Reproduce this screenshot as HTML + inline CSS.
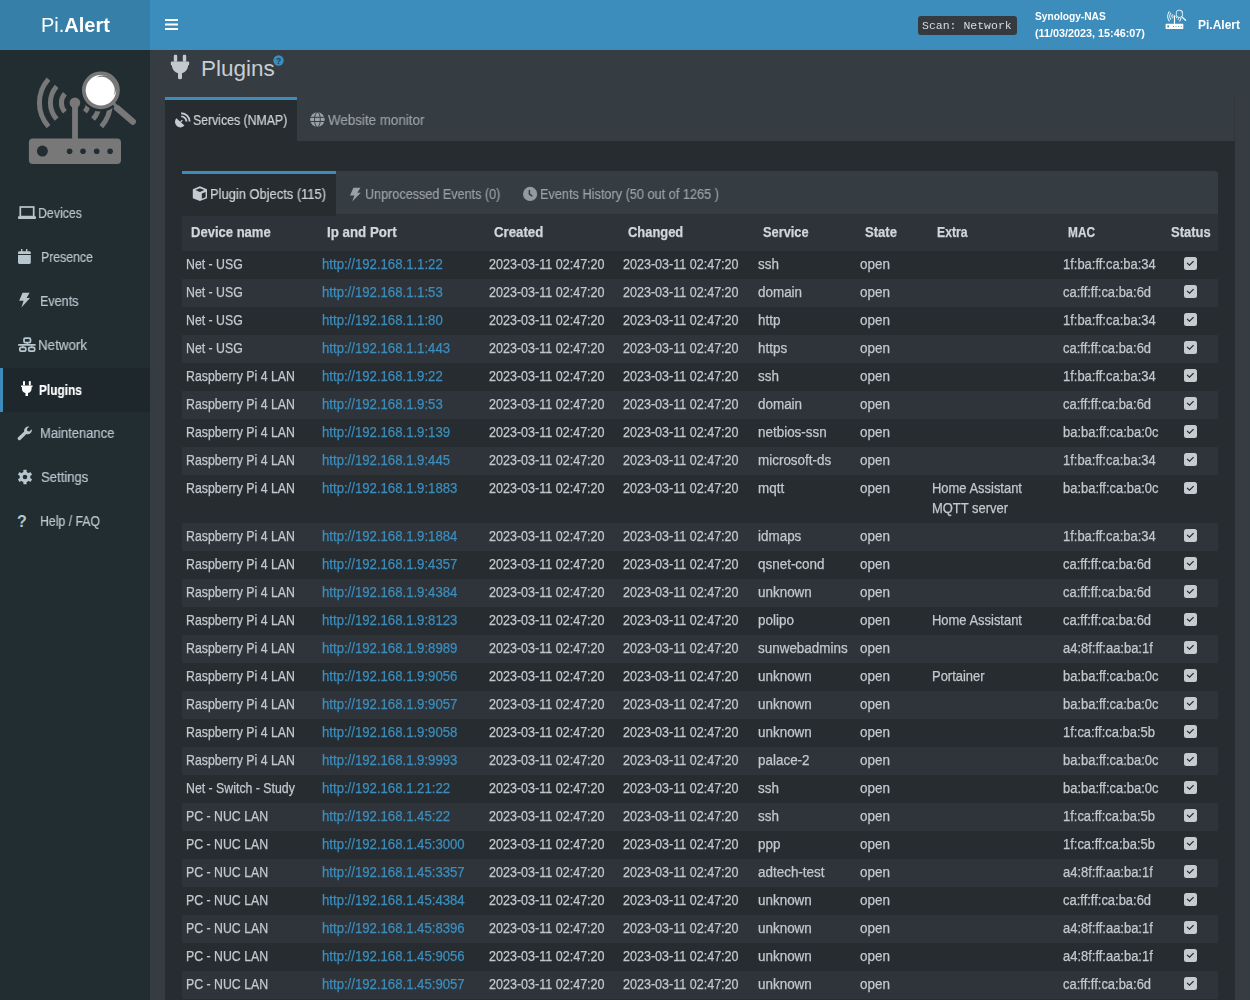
<!DOCTYPE html>
<html><head><meta charset="utf-8"><title>Pi.Alert</title>
<style>
*{box-sizing:border-box;margin:0;padding:0}
html,body{width:1250px;height:1000px;overflow:hidden;background:#353c42;font-family:"Liberation Sans",sans-serif;color:#bec5cb}
.abs{position:absolute}
table,.tabtxt,.mi span,#logo,#nav div{will-change:transform}
#logo{left:0;top:0;width:150px;height:50px;background:#367fa9;color:#fff;font-size:20px;line-height:50px;padding-left:41px}
#logo b{font-weight:bold}
#nav{left:150px;top:0;width:1100px;height:50px;background:#3c8dbc}
#side{left:0;top:50px;width:150px;height:950px;background:#222d32}
.mi{position:absolute;left:0;width:150px;height:44px;line-height:44px;font-size:14px;color:#b8c7ce}
.mi svg{position:absolute}
#side ~ svg{z-index:3}
.mi span{position:absolute;top:0;white-space:nowrap;transform-origin:0 0;-webkit-text-stroke:0.2px currentColor}
.mi.act{background:#1e282c;border-left:3px solid #3c8dbc;color:#fff;font-weight:bold}
#box{left:165px;top:141px;width:1070px;height:859px;background:#272c30}
.otab{left:165px;top:97px;width:132px;height:45px;z-index:2;background:#272c30;border-top:3px solid #3c8dbc}
.tabtxt{position:absolute;z-index:3;font-size:14px;line-height:16px;white-space:nowrap;transform-origin:0 0;-webkit-text-stroke:0.2px currentColor}
#inav{left:182px;top:171px;width:1036px;height:43px;background:#353c42;border-radius:3px 3px 0 0}
.itab{left:182px;top:171px;width:154px;height:45px;z-index:2;background:#272c30;border-top:3px solid #3c8dbc}
table{position:absolute;left:182px;top:214px;width:1036px;border-collapse:collapse;table-layout:fixed}
th{height:37px;padding-bottom:1px !important;background:#2d3339;font-weight:bold;font-size:14px;text-align:left;color:#d2d6da;padding:0 0 0 9px;white-space:nowrap}
.s{display:inline-block;font-style:normal;transform-origin:0 50%;-webkit-text-stroke:0.25px currentColor}
.c0{transform:scaleX(0.88)}.c1{transform:scaleX(0.94)}.c2{transform:scaleX(0.896)}.c4{transform:scaleX(0.96)}.c5{transform:scaleX(0.964)}.c6{transform:scaleX(0.925)}.c7{transform:scaleX(0.925)}
td{height:28px;font-size:14px;padding:0 0 2px 4px;white-space:nowrap;color:#c3c8cd;vertical-align:middle}
tr.tall .cb{top:4.3px}
tr.tall td{height:48px;vertical-align:top;padding-top:2.7px;padding-bottom:0;line-height:20px}
tr.d td{background:#272c30}
tr.l td{background:#2e343a}
td a{color:#3c8dbc}
.cb{display:block;width:13px;height:12.5px;background:#c6cbd0;border-radius:2.5px;position:relative;margin-left:13px;top:-0.5px}
.cb svg{position:absolute;left:0;top:0}
</style></head><body>
<div id="logo" class="abs">Pi.<b>Alert</b></div>
<div id="nav" class="abs">
  <svg class="abs" style="left:15px;top:19px" width="13" height="12" viewBox="0 0 13 12"><rect x="0" y="0" width="13" height="2" fill="#fff"/><rect x="0" y="4.5" width="13" height="2" fill="#fff"/><rect x="0" y="9" width="13" height="2" fill="#fff"/></svg>
  <div class="abs" style="left:768px;top:16px;width:99px;height:19px;background:#343a40;border-radius:3px;font-family:'Liberation Mono',monospace;font-size:11.5px;line-height:19px;color:#d8dcdf;padding-left:4px">Scan: Network</div>
  <div class="abs" style="left:885px;top:10px;font-size:10.2px;line-height:14px;color:#fff;font-weight:bold;white-space:nowrap">Synology-NAS</div><div class="abs" style="left:885px;top:25.8px;font-size:10.8px;line-height:14px;color:#fff;font-weight:bold;white-space:nowrap">(11/03/2023, 15:46:07)</div>
  <svg class="abs" style="left:1015px;top:9px" width="24" height="22" viewBox="0 0 24 22"><g transform="translate(0.6,1.1) scale(0.192,0.209) translate(-28.8,-73)"><use href="#rlogo" style="color:#fff;--bg:#3c8dbc;--lens:#3c8dbc"/></g></svg>
  <div class="abs" style="left:1048px;top:0;font-size:12px;line-height:50px;color:#fff;font-weight:bold">Pi.Alert</div>
</div>
<div id="side" class="abs">
</div>
<svg class="abs" style="left:0;top:0" width="150" height="180" viewBox="0 0 150 180">
<defs><g id="rlogo">
<g fill="none" stroke="currentColor" stroke-width="5">
<path d="M64.87 93.77 A13.5 13.5 0 0 0 64.87 111.83"/>
<path d="M56.69 86.41 A24.5 24.5 0 0 0 56.69 119.19"/>
<path d="M48.52 79.05 A35.5 35.5 0 0 0 48.52 126.55"/>
<path d="M84.93 93.77 A13.5 13.5 0 0 1 84.93 111.83"/>
<path d="M93.11 86.41 A24.5 24.5 0 0 1 93.11 119.19"/>
<path d="M101.28 79.05 A35.5 35.5 0 0 1 101.28 126.55"/>
</g>
<circle cx="100.9" cy="90.3" r="21.2" style="fill:var(--bg)"/>
<circle cx="100.9" cy="90.3" r="18.9" fill="currentColor"/>
<circle cx="100.9" cy="90.3" r="15.2" style="fill:var(--lens)"/>
<path d="M96.5 77.6 A13.6 13.6 0 0 1 113.6 95.5 A12.5 12.5 0 0 0 96.5 77.6 Z" fill="currentColor"/>
<line x1="112" y1="101.5" x2="117.5" y2="107.5" stroke="currentColor" stroke-width="3.2"/>
<line x1="117" y1="108" x2="132.8" y2="121.6" stroke="currentColor" stroke-width="6.3" stroke-linecap="round"/>
<rect x="72.1" y="104" width="5.8" height="35" fill="currentColor"/>
<circle cx="74.9" cy="102.8" r="5.3" fill="currentColor"/>
<rect x="28.9" y="138.5" width="92.1" height="25.5" rx="4" fill="currentColor"/>
<circle cx="42.4" cy="151.1" r="5.5" style="fill:var(--bg)"/>
<circle cx="69.6" cy="151.3" r="2.8" style="fill:var(--bg)"/><circle cx="83" cy="151.3" r="2.8" style="fill:var(--bg)"/><circle cx="96.7" cy="151.3" r="2.8" style="fill:var(--bg)"/><circle cx="110.1" cy="151.3" r="2.8" style="fill:var(--bg)"/>
</g></defs>
<use href="#rlogo" style="color:#787878;--bg:#222d32;--lens:#fff"/>
</svg>
<svg class="abs" style="left:18px;top:206px" width="18" height="13" viewBox="0 0 18 13"><rect x="2.3" y="1" width="13.4" height="9.6" fill="none" stroke="#b8c7ce" stroke-width="1.7"/><rect x="0" y="10.3" width="18" height="2.7" rx="0.8" fill="#b8c7ce"/></svg>
<svg class="abs" style="left:18px;top:249px" width="13" height="15" viewBox="0 0 13 15"><rect x="3" y="0" width="1.4" height="3" fill="#b8c7ce"/><rect x="8" y="0" width="1.4" height="3" fill="#b8c7ce"/><path d="M0 5 V3.6 Q0 2.2 1.4 2.2 H11.4 Q12.8 2.2 12.8 3.6 V5 Z" fill="#b8c7ce"/><path d="M0 6 H12.8 V13.6 Q12.8 15 11.4 15 H1.4 Q0 15 0 13.6 Z" fill="#b8c7ce"/></svg>
<svg class="abs" style="left:18px;top:292px" width="13" height="16" viewBox="0 0 13 16"><path d="M4.5 0.8 L11.6 0.8 L8.6 6 L12 6 L3.4 15.4 L5.6 8.8 L1.2 8.8 Z" fill="#b8c7ce"/></svg>
<svg class="abs" style="left:18px;top:337px" width="18" height="15" viewBox="0 0 18 15"><g fill="none" stroke="#b8c7ce" stroke-width="1.75"><rect x="6" y="1.1" width="6.5" height="4.4" rx="1.3"/><rect x="1.8" y="10.4" width="6" height="3.7" rx="1.3"/><rect x="10.7" y="10.4" width="6" height="3.7" rx="1.3"/></g><g fill="#b8c7ce"><rect x="8.6" y="6" width="1.4" height="1.4"/><rect x="0" y="7" width="17.8" height="1.8" rx="0.9"/><rect x="4" y="8.6" width="1.5" height="1.3"/><rect x="13" y="8.6" width="1.5" height="1.3"/></g></svg>
<svg class="abs" style="left:21px;top:381px" width="12" height="15" viewBox="0 0 12 15"><rect x="2" y="0" width="2" height="4.5" rx="0.8" fill="#fff"/><rect x="7.8" y="0" width="2" height="4.5" rx="0.8" fill="#fff"/><path d="M0 4.6 H11.5 V6 H10.6 V7.5 A4.8 4.8 0 0 1 7 12 V15 H4.5 V12 A4.8 4.8 0 0 1 0.9 7.5 V6 H0 Z" fill="#fff"/></svg>
<svg class="abs" style="left:17px;top:426px" width="16" height="15" viewBox="0 0 16 15"><path d="M14.8 3.2 L12.3 5.6 L10.3 5.1 L9.9 3 L12.3 0.6 A4.2 4.2 0 0 0 7.2 5.6 L1.2 11.3 A1.6 1.6 0 0 0 3.6 13.7 L9.4 8 A4.2 4.2 0 0 0 14.8 3.2 Z" fill="#b8c7ce"/></svg>
<svg class="abs" style="left:17px;top:469px" width="16" height="16" viewBox="-8 -8 16 16"><g fill="#b8c7ce"><circle r="5.3"/><g id="tooth"><rect x="-1.6" y="-7.3" width="3.2" height="3.4" rx="0.5"/></g><use href="#tooth" transform="rotate(60)"/><use href="#tooth" transform="rotate(120)"/><use href="#tooth" transform="rotate(180)"/><use href="#tooth" transform="rotate(240)"/><use href="#tooth" transform="rotate(300)"/></g><circle r="2.3" fill="#222d32"/></svg>
<div class="abs" style="left:17px;top:512.5px;font-size:16px;font-weight:bold;line-height:18px;color:#b8c7ce">?</div>

<div class="mi" style="top:191px"><span style="left:37.7px;transform:scaleX(0.882)">Devices</span></div>
<div class="mi" style="top:235px"><span style="left:40.6px;transform:scaleX(0.878)">Presence</span></div>
<div class="mi" style="top:279px"><span style="left:40.3px;transform:scaleX(0.898)">Events</span></div>
<div class="mi" style="top:323px"><span style="left:37.5px;transform:scaleX(0.955)">Network</span></div>
<div class="mi act" style="top:368px"><span style="left:35.8px;transform:scaleX(0.848)">Plugins</span></div>
<div class="mi" style="top:411px"><span style="left:40.3px;transform:scaleX(0.927)">Maintenance</span></div>
<div class="mi" style="top:455px"><span style="left:41.2px;transform:scaleX(0.935)">Settings</span></div>
<div class="mi" style="top:499px"><span style="left:40.3px;transform:scaleX(0.876)">Help / FAQ</span></div>

<svg class="abs" style="left:170px;top:54px" width="20" height="26" viewBox="0 0 20 26"><g fill="#c4c9cf"><rect x="3.8" y="0.8" width="3.4" height="7" rx="1.2"/><rect x="12.8" y="0.8" width="3.4" height="7" rx="1.2"/><path d="M0.8 8.5 Q0.8 7.5 1.8 7.5 H18.2 Q19.2 7.5 19.2 8.5 V10.2 Q19.2 11 18.3 11.3 L18 12.5 Q17 17.5 12 19.2 V24 Q12 25.2 10 25.2 Q8 25.2 8 24 V19.2 Q3 17.5 2 12.5 L1.7 11.3 Q0.8 11 0.8 10.2 Z"/></g></svg>
<svg class="abs" style="left:273px;top:55px" width="11" height="11" viewBox="0 0 11 11"><circle cx="5.5" cy="5.5" r="5.2" fill="#3c8dbc"/><text x="5.5" y="8.6" font-family="Liberation Sans" font-weight="bold" font-size="8.5" text-anchor="middle" fill="#1d3d52">?</text></svg>
<div class="abs" style="left:201px;top:53px;font-size:22.5px;line-height:32px;color:#c8cdd2">Plugins</div>

<div class="abs otab"></div>
<div class="abs" style="left:1234px;top:97px;width:1px;height:44px;background:#30363b"></div>
<div id="box" class="abs"></div>
<div class="tabtxt" style="left:193px;top:112px;color:#d0d4d8;transform:scaleX(0.878)">Services (NMAP)</div>
<div class="tabtxt" style="left:327.5px;top:112px;color:#9aa1a7;transform:scaleX(0.955)">Website monitor</div>
<div id="inav" class="abs"></div>
<div class="abs itab"></div>
<div class="tabtxt" style="left:210px;top:186px;color:#d0d4d8;transform:scaleX(0.922)">Plugin Objects (115)</div>
<div class="tabtxt" style="left:364.6px;top:186px;color:#9aa1a7;transform:scaleX(0.901)">Unprocessed Events (0)</div>
<div class="tabtxt" style="left:540.2px;top:186px;color:#9aa1a7;transform:scaleX(0.909)">Events History (50 out of 1265 )</div>


<svg class="abs" style="left:175px;top:112px" width="16" height="16" viewBox="0 0 16 16"><path d="M1.4 6.3 L9.5 13.6 A5.45 5.45 0 0 1 1.4 6.3 Z" fill="#c6cbd1"/><path d="M5.5 10 L7.4 8.1" stroke="#c6cbd1" stroke-width="1.3"/><g fill="none" stroke="#c6cbd1" stroke-width="1.9"><path d="M6.2 1.2 A8.4 8.4 0 0 1 14.6 9.6"/><path d="M6.2 4.4 A5.2 5.2 0 0 1 11.4 9.6"/></g></svg>
<svg class="abs" style="left:310px;top:112px" width="16" height="16" viewBox="0 0 16 16"><circle cx="7.4" cy="7.6" r="7.3" fill="#9aa1a7"/><g fill="none" stroke="#353c42" stroke-width="1"><ellipse cx="7.4" cy="7.6" rx="2.9" ry="7.4"/><path d="M0 5.3 H15 M0 9.5 H15"/></g></svg>
<svg class="abs" style="left:192px;top:186px" width="16" height="16" viewBox="0 0 16 16"><path d="M7.9 0.3 L15 3.2 V12.3 L7.9 15 L0.8 12.3 V3.2 Z" fill="#c6cbd1"/><path d="M3.4 4.1 L7.9 2.3 L12.4 4.1 L7.9 5.9 Z" fill="#272c30"/><path d="M9.8 7.5 L13.6 6 V11.2 L9.8 12.7 Z" fill="#272c30"/></svg>
<svg class="abs" style="left:349px;top:187px" width="13" height="15" viewBox="0 0 13 15"><path d="M4.4 0.8 L11.4 0.8 L8.4 5.8 L11.8 5.8 L3.2 14.6 L5.4 8.4 L1 8.4 Z" fill="#9aa1a7"/></svg>
<svg class="abs" style="left:522px;top:186px" width="16" height="16" viewBox="0 0 16 16"><circle cx="8.1" cy="7.9" r="7.1" fill="#939aa1"/><path d="M7.4 4.4 V8 L9.9 9.8" fill="none" stroke="#353c42" stroke-width="1.5" stroke-linecap="round"/></svg>

<table>
<colgroup><col style="width:136px"><col style="width:167px"><col style="width:134px"><col style="width:135px"><col style="width:102px"><col style="width:72px"><col style="width:131px"><col style="width:108px"><col style="width:51px"></colgroup>
<thead><tr><th><i class="s" style="transform:scaleX(0.931)">Device name</i></th><th><i class="s" style="transform:scaleX(0.952)">Ip and Port</i></th><th><i class="s" style="transform:scaleX(0.944)">Created</i></th><th><i class="s" style="transform:scaleX(0.922)">Changed</i></th><th><i class="s" style="transform:scaleX(0.915)">Service</i></th><th><i class="s" style="transform:scaleX(0.932)">State</i></th><th><i class="s" style="transform:scaleX(0.871)">Extra</i></th><th><i class="s" style="transform:scaleX(0.847)">MAC</i></th><th style="padding-left:4px"><i class="s" style="transform:scaleX(0.926)">Status</i></th></tr></thead>
<tbody>
<tr class="d"><td><i class="s c0">Net - USG</i></td><td><a class="s c1">http://192.168.1.1:22</a></td><td><i class="s c2">2023-03-11 02:47:20</i></td><td><i class="s c2">2023-03-11 02:47:20</i></td><td><i class="s c4">ssh</i></td><td><i class="s c5">open</i></td><td></td><td><i class="s c7">1f:ba:ff:ca:ba:34</i></td><td><span class="cb"><svg width="13" height="13" viewBox="0 0 13 13"><path d="M3 5.8 L5.5 8.2 L9.6 4.1" fill="none" stroke="#23272b" stroke-width="1.15"/></svg></span></td></tr>
<tr class="l"><td><i class="s c0">Net - USG</i></td><td><a class="s c1">http://192.168.1.1:53</a></td><td><i class="s c2">2023-03-11 02:47:20</i></td><td><i class="s c2">2023-03-11 02:47:20</i></td><td><i class="s c4">domain</i></td><td><i class="s c5">open</i></td><td></td><td><i class="s c7">ca:ff:ff:ca:ba:6d</i></td><td><span class="cb"><svg width="13" height="13" viewBox="0 0 13 13"><path d="M3 5.8 L5.5 8.2 L9.6 4.1" fill="none" stroke="#23272b" stroke-width="1.15"/></svg></span></td></tr>
<tr class="d"><td><i class="s c0">Net - USG</i></td><td><a class="s c1">http://192.168.1.1:80</a></td><td><i class="s c2">2023-03-11 02:47:20</i></td><td><i class="s c2">2023-03-11 02:47:20</i></td><td><i class="s c4">http</i></td><td><i class="s c5">open</i></td><td></td><td><i class="s c7">1f:ba:ff:ca:ba:34</i></td><td><span class="cb"><svg width="13" height="13" viewBox="0 0 13 13"><path d="M3 5.8 L5.5 8.2 L9.6 4.1" fill="none" stroke="#23272b" stroke-width="1.15"/></svg></span></td></tr>
<tr class="l"><td><i class="s c0">Net - USG</i></td><td><a class="s c1">http://192.168.1.1:443</a></td><td><i class="s c2">2023-03-11 02:47:20</i></td><td><i class="s c2">2023-03-11 02:47:20</i></td><td><i class="s c4">https</i></td><td><i class="s c5">open</i></td><td></td><td><i class="s c7">ca:ff:ff:ca:ba:6d</i></td><td><span class="cb"><svg width="13" height="13" viewBox="0 0 13 13"><path d="M3 5.8 L5.5 8.2 L9.6 4.1" fill="none" stroke="#23272b" stroke-width="1.15"/></svg></span></td></tr>
<tr class="d"><td><i class="s c0">Raspberry Pi 4 LAN</i></td><td><a class="s c1">http://192.168.1.9:22</a></td><td><i class="s c2">2023-03-11 02:47:20</i></td><td><i class="s c2">2023-03-11 02:47:20</i></td><td><i class="s c4">ssh</i></td><td><i class="s c5">open</i></td><td></td><td><i class="s c7">1f:ba:ff:ca:ba:34</i></td><td><span class="cb"><svg width="13" height="13" viewBox="0 0 13 13"><path d="M3 5.8 L5.5 8.2 L9.6 4.1" fill="none" stroke="#23272b" stroke-width="1.15"/></svg></span></td></tr>
<tr class="l"><td><i class="s c0">Raspberry Pi 4 LAN</i></td><td><a class="s c1">http://192.168.1.9:53</a></td><td><i class="s c2">2023-03-11 02:47:20</i></td><td><i class="s c2">2023-03-11 02:47:20</i></td><td><i class="s c4">domain</i></td><td><i class="s c5">open</i></td><td></td><td><i class="s c7">ca:ff:ff:ca:ba:6d</i></td><td><span class="cb"><svg width="13" height="13" viewBox="0 0 13 13"><path d="M3 5.8 L5.5 8.2 L9.6 4.1" fill="none" stroke="#23272b" stroke-width="1.15"/></svg></span></td></tr>
<tr class="d"><td><i class="s c0">Raspberry Pi 4 LAN</i></td><td><a class="s c1">http://192.168.1.9:139</a></td><td><i class="s c2">2023-03-11 02:47:20</i></td><td><i class="s c2">2023-03-11 02:47:20</i></td><td><i class="s c4">netbios-ssn</i></td><td><i class="s c5">open</i></td><td></td><td><i class="s c7">ba:ba:ff:ca:ba:0c</i></td><td><span class="cb"><svg width="13" height="13" viewBox="0 0 13 13"><path d="M3 5.8 L5.5 8.2 L9.6 4.1" fill="none" stroke="#23272b" stroke-width="1.15"/></svg></span></td></tr>
<tr class="l"><td><i class="s c0">Raspberry Pi 4 LAN</i></td><td><a class="s c1">http://192.168.1.9:445</a></td><td><i class="s c2">2023-03-11 02:47:20</i></td><td><i class="s c2">2023-03-11 02:47:20</i></td><td><i class="s c4">microsoft-ds</i></td><td><i class="s c5">open</i></td><td></td><td><i class="s c7">1f:ba:ff:ca:ba:34</i></td><td><span class="cb"><svg width="13" height="13" viewBox="0 0 13 13"><path d="M3 5.8 L5.5 8.2 L9.6 4.1" fill="none" stroke="#23272b" stroke-width="1.15"/></svg></span></td></tr>
<tr class="d tall"><td><i class="s c0">Raspberry Pi 4 LAN</i></td><td><a class="s c1">http://192.168.1.9:1883</a></td><td><i class="s c2">2023-03-11 02:47:20</i></td><td><i class="s c2">2023-03-11 02:47:20</i></td><td><i class="s c4">mqtt</i></td><td><i class="s c5">open</i></td><td><i class="s c6">Home Assistant<br>MQTT server</i></td><td><i class="s c7">ba:ba:ff:ca:ba:0c</i></td><td><span class="cb"><svg width="13" height="13" viewBox="0 0 13 13"><path d="M3 5.8 L5.5 8.2 L9.6 4.1" fill="none" stroke="#23272b" stroke-width="1.15"/></svg></span></td></tr>
<tr class="l"><td><i class="s c0">Raspberry Pi 4 LAN</i></td><td><a class="s c1">http://192.168.1.9:1884</a></td><td><i class="s c2">2023-03-11 02:47:20</i></td><td><i class="s c2">2023-03-11 02:47:20</i></td><td><i class="s c4">idmaps</i></td><td><i class="s c5">open</i></td><td></td><td><i class="s c7">1f:ba:ff:ca:ba:34</i></td><td><span class="cb"><svg width="13" height="13" viewBox="0 0 13 13"><path d="M3 5.8 L5.5 8.2 L9.6 4.1" fill="none" stroke="#23272b" stroke-width="1.15"/></svg></span></td></tr>
<tr class="d"><td><i class="s c0">Raspberry Pi 4 LAN</i></td><td><a class="s c1">http://192.168.1.9:4357</a></td><td><i class="s c2">2023-03-11 02:47:20</i></td><td><i class="s c2">2023-03-11 02:47:20</i></td><td><i class="s c4">qsnet-cond</i></td><td><i class="s c5">open</i></td><td></td><td><i class="s c7">ca:ff:ff:ca:ba:6d</i></td><td><span class="cb"><svg width="13" height="13" viewBox="0 0 13 13"><path d="M3 5.8 L5.5 8.2 L9.6 4.1" fill="none" stroke="#23272b" stroke-width="1.15"/></svg></span></td></tr>
<tr class="l"><td><i class="s c0">Raspberry Pi 4 LAN</i></td><td><a class="s c1">http://192.168.1.9:4384</a></td><td><i class="s c2">2023-03-11 02:47:20</i></td><td><i class="s c2">2023-03-11 02:47:20</i></td><td><i class="s c4">unknown</i></td><td><i class="s c5">open</i></td><td></td><td><i class="s c7">ca:ff:ff:ca:ba:6d</i></td><td><span class="cb"><svg width="13" height="13" viewBox="0 0 13 13"><path d="M3 5.8 L5.5 8.2 L9.6 4.1" fill="none" stroke="#23272b" stroke-width="1.15"/></svg></span></td></tr>
<tr class="d"><td><i class="s c0">Raspberry Pi 4 LAN</i></td><td><a class="s c1">http://192.168.1.9:8123</a></td><td><i class="s c2">2023-03-11 02:47:20</i></td><td><i class="s c2">2023-03-11 02:47:20</i></td><td><i class="s c4">polipo</i></td><td><i class="s c5">open</i></td><td><i class="s c6">Home Assistant</i></td><td><i class="s c7">ca:ff:ff:ca:ba:6d</i></td><td><span class="cb"><svg width="13" height="13" viewBox="0 0 13 13"><path d="M3 5.8 L5.5 8.2 L9.6 4.1" fill="none" stroke="#23272b" stroke-width="1.15"/></svg></span></td></tr>
<tr class="l"><td><i class="s c0">Raspberry Pi 4 LAN</i></td><td><a class="s c1">http://192.168.1.9:8989</a></td><td><i class="s c2">2023-03-11 02:47:20</i></td><td><i class="s c2">2023-03-11 02:47:20</i></td><td><i class="s c4">sunwebadmins</i></td><td><i class="s c5">open</i></td><td></td><td><i class="s c7">a4:8f:ff:aa:ba:1f</i></td><td><span class="cb"><svg width="13" height="13" viewBox="0 0 13 13"><path d="M3 5.8 L5.5 8.2 L9.6 4.1" fill="none" stroke="#23272b" stroke-width="1.15"/></svg></span></td></tr>
<tr class="d"><td><i class="s c0">Raspberry Pi 4 LAN</i></td><td><a class="s c1">http://192.168.1.9:9056</a></td><td><i class="s c2">2023-03-11 02:47:20</i></td><td><i class="s c2">2023-03-11 02:47:20</i></td><td><i class="s c4">unknown</i></td><td><i class="s c5">open</i></td><td><i class="s c6">Portainer</i></td><td><i class="s c7">ba:ba:ff:ca:ba:0c</i></td><td><span class="cb"><svg width="13" height="13" viewBox="0 0 13 13"><path d="M3 5.8 L5.5 8.2 L9.6 4.1" fill="none" stroke="#23272b" stroke-width="1.15"/></svg></span></td></tr>
<tr class="l"><td><i class="s c0">Raspberry Pi 4 LAN</i></td><td><a class="s c1">http://192.168.1.9:9057</a></td><td><i class="s c2">2023-03-11 02:47:20</i></td><td><i class="s c2">2023-03-11 02:47:20</i></td><td><i class="s c4">unknown</i></td><td><i class="s c5">open</i></td><td></td><td><i class="s c7">ba:ba:ff:ca:ba:0c</i></td><td><span class="cb"><svg width="13" height="13" viewBox="0 0 13 13"><path d="M3 5.8 L5.5 8.2 L9.6 4.1" fill="none" stroke="#23272b" stroke-width="1.15"/></svg></span></td></tr>
<tr class="d"><td><i class="s c0">Raspberry Pi 4 LAN</i></td><td><a class="s c1">http://192.168.1.9:9058</a></td><td><i class="s c2">2023-03-11 02:47:20</i></td><td><i class="s c2">2023-03-11 02:47:20</i></td><td><i class="s c4">unknown</i></td><td><i class="s c5">open</i></td><td></td><td><i class="s c7">1f:ca:ff:ca:ba:5b</i></td><td><span class="cb"><svg width="13" height="13" viewBox="0 0 13 13"><path d="M3 5.8 L5.5 8.2 L9.6 4.1" fill="none" stroke="#23272b" stroke-width="1.15"/></svg></span></td></tr>
<tr class="l"><td><i class="s c0">Raspberry Pi 4 LAN</i></td><td><a class="s c1">http://192.168.1.9:9993</a></td><td><i class="s c2">2023-03-11 02:47:20</i></td><td><i class="s c2">2023-03-11 02:47:20</i></td><td><i class="s c4">palace-2</i></td><td><i class="s c5">open</i></td><td></td><td><i class="s c7">ba:ba:ff:ca:ba:0c</i></td><td><span class="cb"><svg width="13" height="13" viewBox="0 0 13 13"><path d="M3 5.8 L5.5 8.2 L9.6 4.1" fill="none" stroke="#23272b" stroke-width="1.15"/></svg></span></td></tr>
<tr class="d"><td><i class="s c0">Net - Switch - Study</i></td><td><a class="s c1">http://192.168.1.21:22</a></td><td><i class="s c2">2023-03-11 02:47:20</i></td><td><i class="s c2">2023-03-11 02:47:20</i></td><td><i class="s c4">ssh</i></td><td><i class="s c5">open</i></td><td></td><td><i class="s c7">ba:ba:ff:ca:ba:0c</i></td><td><span class="cb"><svg width="13" height="13" viewBox="0 0 13 13"><path d="M3 5.8 L5.5 8.2 L9.6 4.1" fill="none" stroke="#23272b" stroke-width="1.15"/></svg></span></td></tr>
<tr class="l"><td><i class="s c0">PC - NUC LAN</i></td><td><a class="s c1">http://192.168.1.45:22</a></td><td><i class="s c2">2023-03-11 02:47:20</i></td><td><i class="s c2">2023-03-11 02:47:20</i></td><td><i class="s c4">ssh</i></td><td><i class="s c5">open</i></td><td></td><td><i class="s c7">1f:ca:ff:ca:ba:5b</i></td><td><span class="cb"><svg width="13" height="13" viewBox="0 0 13 13"><path d="M3 5.8 L5.5 8.2 L9.6 4.1" fill="none" stroke="#23272b" stroke-width="1.15"/></svg></span></td></tr>
<tr class="d"><td><i class="s c0">PC - NUC LAN</i></td><td><a class="s c1">http://192.168.1.45:3000</a></td><td><i class="s c2">2023-03-11 02:47:20</i></td><td><i class="s c2">2023-03-11 02:47:20</i></td><td><i class="s c4">ppp</i></td><td><i class="s c5">open</i></td><td></td><td><i class="s c7">1f:ca:ff:ca:ba:5b</i></td><td><span class="cb"><svg width="13" height="13" viewBox="0 0 13 13"><path d="M3 5.8 L5.5 8.2 L9.6 4.1" fill="none" stroke="#23272b" stroke-width="1.15"/></svg></span></td></tr>
<tr class="l"><td><i class="s c0">PC - NUC LAN</i></td><td><a class="s c1">http://192.168.1.45:3357</a></td><td><i class="s c2">2023-03-11 02:47:20</i></td><td><i class="s c2">2023-03-11 02:47:20</i></td><td><i class="s c4">adtech-test</i></td><td><i class="s c5">open</i></td><td></td><td><i class="s c7">a4:8f:ff:aa:ba:1f</i></td><td><span class="cb"><svg width="13" height="13" viewBox="0 0 13 13"><path d="M3 5.8 L5.5 8.2 L9.6 4.1" fill="none" stroke="#23272b" stroke-width="1.15"/></svg></span></td></tr>
<tr class="d"><td><i class="s c0">PC - NUC LAN</i></td><td><a class="s c1">http://192.168.1.45:4384</a></td><td><i class="s c2">2023-03-11 02:47:20</i></td><td><i class="s c2">2023-03-11 02:47:20</i></td><td><i class="s c4">unknown</i></td><td><i class="s c5">open</i></td><td></td><td><i class="s c7">ca:ff:ff:ca:ba:6d</i></td><td><span class="cb"><svg width="13" height="13" viewBox="0 0 13 13"><path d="M3 5.8 L5.5 8.2 L9.6 4.1" fill="none" stroke="#23272b" stroke-width="1.15"/></svg></span></td></tr>
<tr class="l"><td><i class="s c0">PC - NUC LAN</i></td><td><a class="s c1">http://192.168.1.45:8396</a></td><td><i class="s c2">2023-03-11 02:47:20</i></td><td><i class="s c2">2023-03-11 02:47:20</i></td><td><i class="s c4">unknown</i></td><td><i class="s c5">open</i></td><td></td><td><i class="s c7">a4:8f:ff:aa:ba:1f</i></td><td><span class="cb"><svg width="13" height="13" viewBox="0 0 13 13"><path d="M3 5.8 L5.5 8.2 L9.6 4.1" fill="none" stroke="#23272b" stroke-width="1.15"/></svg></span></td></tr>
<tr class="d"><td><i class="s c0">PC - NUC LAN</i></td><td><a class="s c1">http://192.168.1.45:9056</a></td><td><i class="s c2">2023-03-11 02:47:20</i></td><td><i class="s c2">2023-03-11 02:47:20</i></td><td><i class="s c4">unknown</i></td><td><i class="s c5">open</i></td><td></td><td><i class="s c7">a4:8f:ff:aa:ba:1f</i></td><td><span class="cb"><svg width="13" height="13" viewBox="0 0 13 13"><path d="M3 5.8 L5.5 8.2 L9.6 4.1" fill="none" stroke="#23272b" stroke-width="1.15"/></svg></span></td></tr>
<tr class="l"><td><i class="s c0">PC - NUC LAN</i></td><td><a class="s c1">http://192.168.1.45:9057</a></td><td><i class="s c2">2023-03-11 02:47:20</i></td><td><i class="s c2">2023-03-11 02:47:20</i></td><td><i class="s c4">unknown</i></td><td><i class="s c5">open</i></td><td></td><td><i class="s c7">ca:ff:ff:ca:ba:6d</i></td><td><span class="cb"><svg width="13" height="13" viewBox="0 0 13 13"><path d="M3 5.8 L5.5 8.2 L9.6 4.1" fill="none" stroke="#23272b" stroke-width="1.15"/></svg></span></td></tr>
</tbody></table>
</body></html>
